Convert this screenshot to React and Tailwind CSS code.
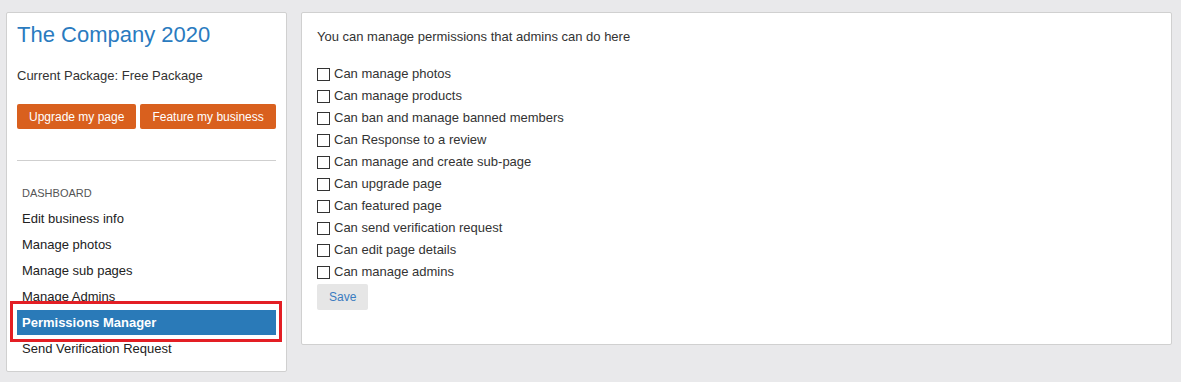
import React from "react";

const permissions = [
  "Can manage photos",
  "Can manage products",
  "Can ban and manage banned members",
  "Can Response to a review",
  "Can manage and create sub-page",
  "Can upgrade page",
  "Can featured page",
  "Can send verification request",
  "Can edit page details",
  "Can manage admins",
];

const menu = [
  "Edit business info",
  "Manage photos",
  "Manage sub pages",
  "Manage Admins",
  "Permissions Manager",
  "Send Verification Request",
];

const App = () => {
  return (
    <div className="min-h-[382px] bg-[#e9e9eb] flex items-start gap-[14px] pt-[12px] pl-[6px] pr-[9px] font-['Liberation_Sans',Arial,sans-serif] text-[#333]">
      <div className="w-[281px] shrink-0 bg-white border border-[#d0d0d0] rounded-[2px] px-[10px] pb-[9px]">
        <h1 className="mt-[9px] text-[22px] leading-[26px] text-[#2a7bbf]">
          The Company 2020
        </h1>
        <p className="mt-[18px] text-[13px] leading-[20px]">
          Current Package: Free Package
        </p>
        <div className="mt-[18px] flex gap-[4px]">
          <button className="h-[25px] px-[12px] bg-[#d9601e] text-white text-[12px] rounded-[2px]">
            Upgrade my page
          </button>
          <button className="h-[25px] px-[12px] bg-[#d9601e] text-white text-[12px] rounded-[2px]">
            Feature my business
          </button>
        </div>
        <div className="mt-[31px] h-px bg-[#cfcfcf]" />
        <div className="mt-[24px] pl-[5px] text-[11px] leading-[16px] text-[#555]">
          DASHBOARD
        </div>
        <ul className="mt-[5px]">
          {menu.map((item) =>
            item === "Permissions Manager" ? (
              <li key={item} className="relative h-[26px]">
                <div className="h-[25px] leading-[25px] pl-[5px] bg-[#2a7ab8] text-white font-bold text-[13px]">
                  {item}
                </div>
                <div className="absolute -top-[9px] -left-[7px] -right-[6px] -bottom-[6px] border-[3px] border-[#e31e24]" />
              </li>
            ) : (
              <li key={item} className="h-[26px] leading-[26px] pl-[5px] text-[13px] text-[#222]">
                {item}
              </li>
            )
          )}
        </ul>
      </div>

      <div className="flex-1 bg-white border border-[#d0d0d0] rounded-[2px] pl-[15px] pt-[14px] pb-[34px]">
        <p className="text-[13px] leading-[20px]">
          You can manage permissions that admins can do here
        </p>
        <div className="mt-[16px]">
          {permissions.map((p) => (
            <label key={p} className="flex items-center h-[22px] text-[13px]">
              <span className="w-[13px] h-[13px] border border-[#333] bg-white" />
              <span className="ml-[4px]">{p}</span>
            </label>
          ))}
        </div>
        <button className="mt-px h-[26px] px-[12px] bg-[#e6e6e6] text-[#3a7cc0] text-[12px] rounded-[2px]">
          Save
        </button>
      </div>
    </div>
  );
};

export default App;
